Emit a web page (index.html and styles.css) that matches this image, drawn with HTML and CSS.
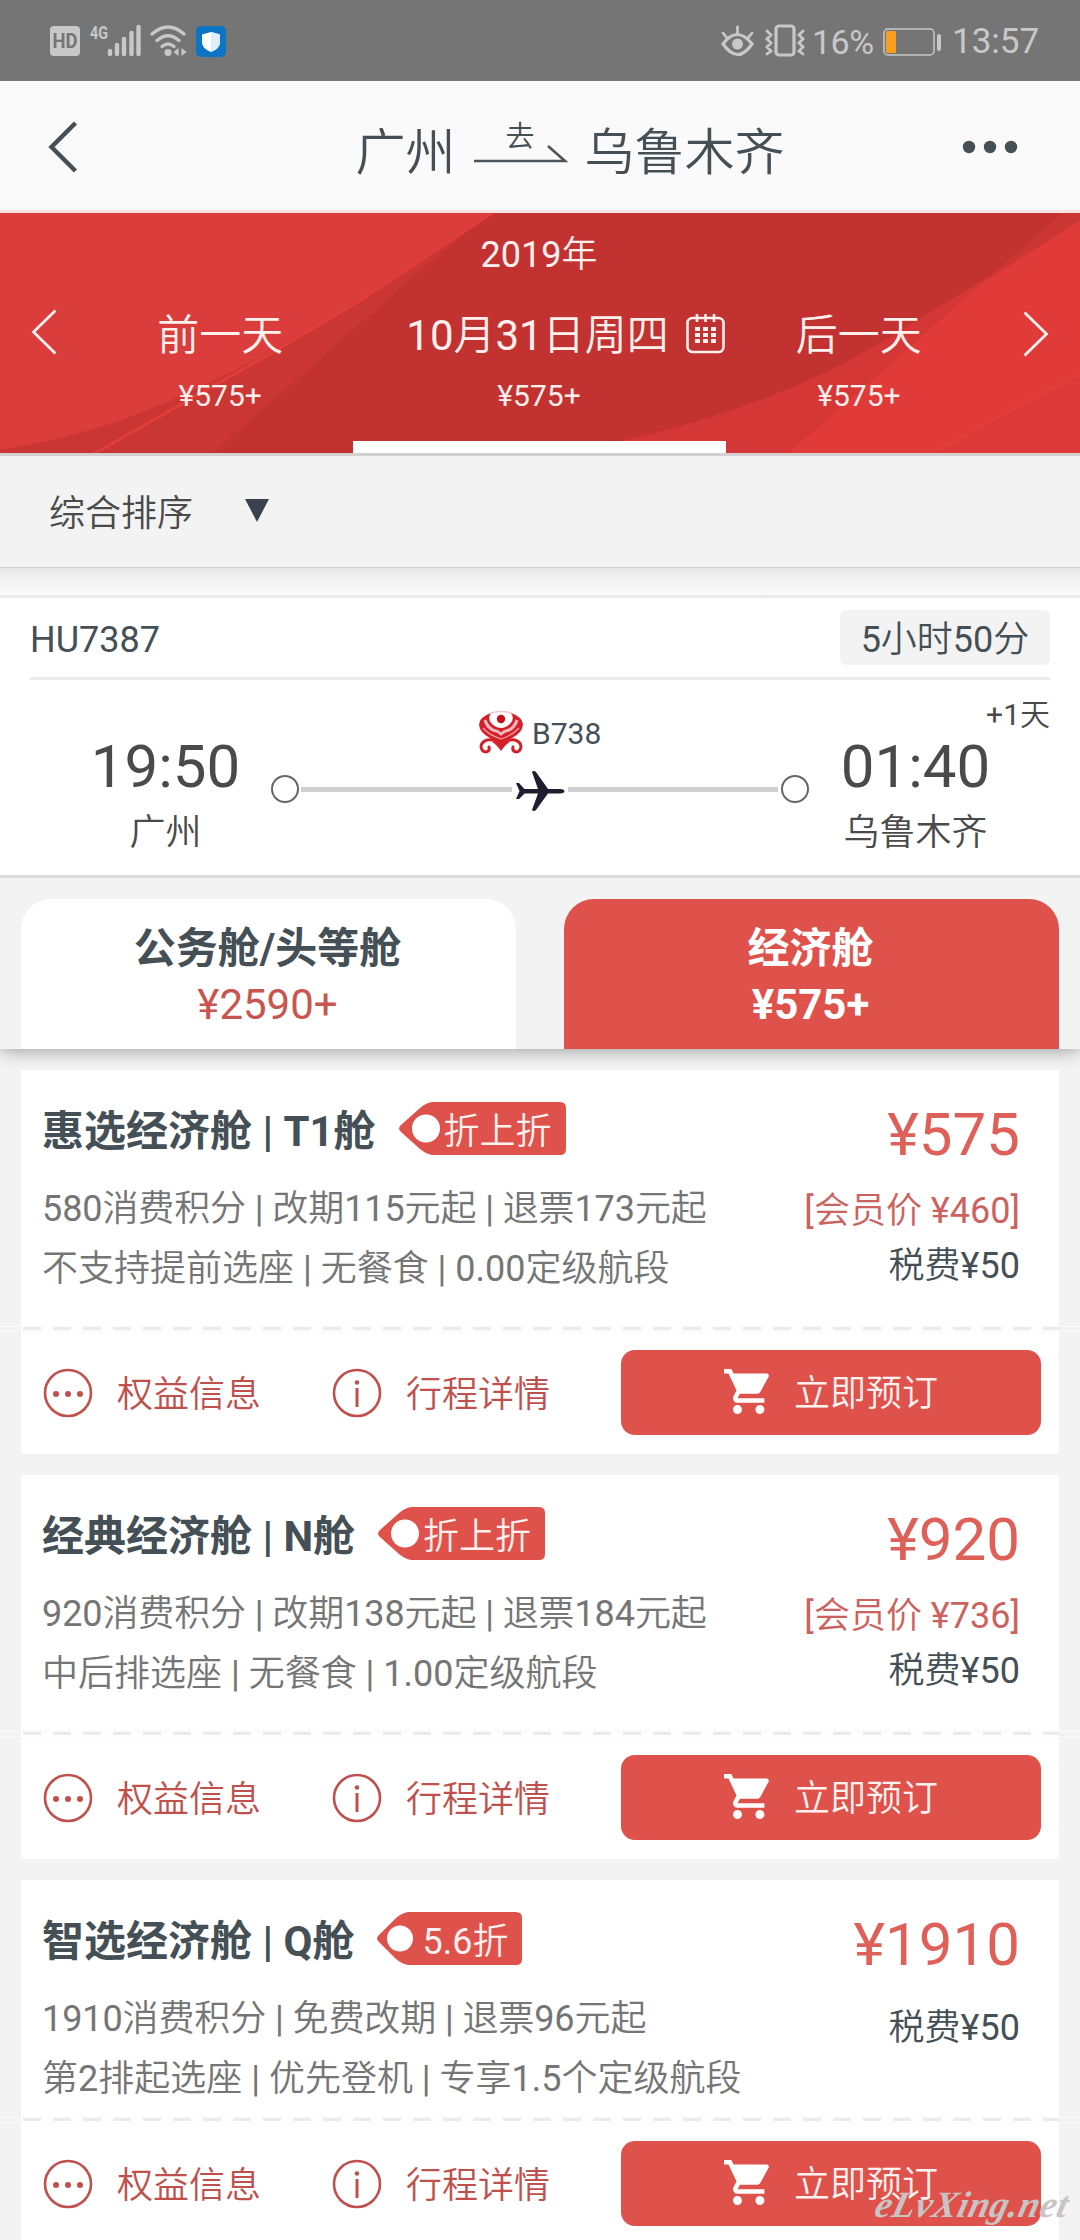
FILE: index.html
```html
<!DOCTYPE html>
<html lang="zh-CN">
<head>
<meta charset="utf-8">
<title>航班查询</title>
<link rel="stylesheet" href="styles.css">
</head>
<body>
<svg class="defs" width="0" height="0">
  <symbol id="i-more" viewBox="0 0 50 50">
    <circle cx="25" cy="25" r="23" fill="none" stroke="currentColor" stroke-width="2.6"/>
    <circle cx="13" cy="26" r="3"/><circle cx="25" cy="26" r="3"/><circle cx="37" cy="26" r="3"/>
  </symbol>
  <symbol id="i-info" viewBox="0 0 50 50">
    <circle cx="25" cy="25" r="23" fill="none" stroke="currentColor" stroke-width="2.6"/>
    <circle cx="25" cy="14.5" r="2.3"/><rect x="23.5" y="20" width="3" height="19"/>
  </symbol>
  <symbol id="i-cart" viewBox="1 2 20.5 20">
    <path d="M7 18c-1.1 0-1.99.9-1.99 2S5.900 22 7 22s2-.9 2-2-.9-2-2-2zM1 2v2h2l3.600 7.590-1.350 2.450c-.16.28-.25.61-.25.96 0 1.100.9 2 2 2h12v-2H7.420c-.14 0-.25-.11-.25-.25l.03-.12.9-1.630h7.450c.75 0 1.410-.41 1.750-1.030l3.580-6.490A1 1 0 0 0 20 4H5.210l-.94-2H1zm16 16c-1.100 0-1.990.9-1.990 2s.89 2 1.990 2 2-.9 2-2-.9-2-2-2z"/>
  </symbol>
</svg>

<header class="status">
  <svg class="status-left" width="190" height="40" viewBox="0 0 190 40">
    <rect x="0" y="4" width="30" height="30" rx="4" fill="#c8c8c8"/>
    <text x="15" y="26" class="hd" textLength="25" lengthAdjust="spacingAndGlyphs">HD</text>
    <text x="40" y="17" class="net" textLength="18" lengthAdjust="spacingAndGlyphs">4G</text>
    <g stroke="#c8c8c8" stroke-width="4.400" stroke-linecap="round">
      <path d="M60 29v3M67 23v9M74 17v15M81.500 11v21M88.500 5v27"/>
    </g>
    <g fill="none" stroke="#c8c8c8" stroke-width="3.400" stroke-linecap="round">
      <path d="M102 12q16-14 32 0M107 18.500q11-9.500 22 0M112 24.500q6-5 12 0"/>
    </g>
    <circle cx="118" cy="30.500" r="3.500" fill="#c8c8c8"/>
    <path d="M123.500 30l5-4v8zM136.500 30l-5-4v8z" fill="#c8c8c8"/>
    <rect x="146" y="4" width="30" height="31" rx="5" fill="#0b74c4"/>
    <path d="M161 10l9 2.500v8q0 6-9 9.500q-9-3.500-9-9.500v-8z" fill="#fff"/>
    <path d="M161 10l9 2.500v8q0 6-9 9.500z" fill="#dceffa"/>
  </svg>
  <div class="status-right">
    <svg width="86" height="40" viewBox="0 0 86 40">
      <g fill="none" stroke="#c8c8c8" stroke-width="3.200" stroke-linecap="round">
        <path d="M3 21q14-19 29 0q-14 21-29 0z"/>
        <path d="M3 10l4 5M17.500 4v6M32 10l-4 5M47 8l4 4-4 4 4 4-4 4 4 4-4 3" stroke-width="2.800"/>
        <rect x="56" y="3" width="18" height="29" rx="3"/>
        <path d="M83 8l-4 4 4 4-4 4 4 4-4 4 4 3" stroke-width="2.800"/>
      </g>
      <circle cx="17.500" cy="21" r="5.500" fill="#c8c8c8"/>
    </svg>
    <span class="pct">16%</span>
    <svg class="battery" width="60" height="30" viewBox="0 0 60 30">
      <rect x="1" y="1" width="50" height="26" rx="4" fill="none" stroke="#c8c8c8" stroke-width="1.500"/>
      <rect x="3" y="3" width="10" height="22" rx="1.500" fill="#f7a01d"/>
      <rect x="54" y="6" width="4" height="17" rx="2" fill="#c8c8c8"/>
    </svg>
    <span class="clock">13:57</span>
  </div>
</header>

<nav class="titlebar">
  <svg class="back" width="30" height="52" viewBox="0 0 30 52"><path d="M27.500 2L3.500 26l24 24" fill="none" stroke="#454f56" stroke-width="4.500"/></svg>
  <h1 class="route">
    <span>广州</span>
    <span class="route-dir"><small>去</small>
      <svg width="94" height="19" viewBox="0 0 94 19"><path d="M0 17H91L74 2" fill="none" stroke="#4b555c" stroke-width="2.600"/></svg>
    </span>
    <span>乌鲁木齐</span>
  </h1>
  <svg class="menu" width="56" height="14" viewBox="0 0 56 14" fill="#454f56"><circle cx="7" cy="7" r="6.200"/><circle cx="28" cy="7" r="6.200"/><circle cx="49" cy="7" r="6.200"/></svg>
</nav>

<section class="dates">
  <svg class="dates-bg" width="1080" height="240" viewBox="0 0 1080 240">
    <rect width="1080" height="240" fill="#c23231"/>
    <path d="M0 0H490L361 87L96 240H0z" fill="#da3d3b"/>
    <path d="M0 237Q90 222 155 194Q220 167 280 133L361 87L490 0L406 70L300 164L213 240H0z" fill="#c93634"/>
    <path d="M492 0L361 87L275 138L92 242" fill="none" stroke="#e03d3b" stroke-width="3"/>
    <path d="M1080 7L988 64L929 100Q870 137 836 154Q720 212 560 240H1080z" fill="#d43736"/>
    <path d="M1062 0H1080V8L988 64z" fill="#c93634"/>
    <path d="M1080 7L977 74L884 157L788 240H1080z" fill="#e03a39"/>
    <path d="M1080 160L932 240H1080z" fill="#dd3938"/>
    <path d="M1080 160L932 240" stroke="#e23e3c" stroke-width="3"/>
  </svg>
  <svg class="prev" width="26" height="46" viewBox="0 0 26 46"><path d="M24.500 1.500L2.500 23l22 21.500" fill="none" stroke="#ffefed" stroke-width="2.800"/></svg>
  <div class="day before"><b>前一天</b><i>¥575+</i></div>
  <div class="day current">
    <em>2019年</em>
    <b>10月31日周四
      <svg width="40" height="42" viewBox="0 0 40 42">
        <g fill="none" stroke="#ffefed" stroke-width="2.600"><rect x="1.500" y="5" width="36" height="34" rx="5"/><path d="M11 1v8M19.500 1v8M28 1v8"/></g>
        <path d="M9 14h5v4H9zM17 14h5v4h-5zM25 14h5v4h-5zM9 20h5v4H9zM17 20h5v4h-5zM25 20h5v4h-5zM9 26h5v4H9zM17 26h5v4h-5zM25 26h5v4h-5z" fill="#ffefed"/>
      </svg></b>
    <i>¥575+</i>
    <span class="marker"></span>
  </div>
  <div class="day after"><b>后一天</b><i>¥575+</i></div>
  <svg class="next" width="26" height="46" viewBox="0 0 26 46"><path d="M1.500 1.500L23.500 23l-22 21.500" fill="none" stroke="#ffefed" stroke-width="2.800"/></svg>
</section>

<div class="sort"><span>综合排序</span><span class="caret"></span></div>
<div class="shade"></div>

<section class="flight">
  <div class="flight-head"><span>HU7387</span><span class="duration">5小时50分</span></div>
  <div class="flight-body">
    <div class="stop from"><strong>19:50</strong><span>广州</span></div>
    <div class="track">
      <div class="plane-type">
        <svg width="46" height="44" viewBox="0 0 46 44">
          <path d="M13 2Q1 6 1 14Q2 22 12 27Q19 30 23 35Q27 30 34 27Q44 22 45 14Q45 6 33 2Q37 8 32 13Q23 21 14 13Q9 8 13 2z" fill="#d4202a"/>
          <path d="M7 9Q9 16 15 19Q20 20 23 23Q26 20 31 19Q37 16 39 9" fill="none" stroke="#f6b9bb" stroke-width="3"/>
          <path d="M5 17Q11 24 23 28Q35 24 41 17" fill="none" stroke="#f3a5a8" stroke-width="1.200"/>
          <path d="M13 2Q23-1 33 2" fill="none" stroke="#f6c4c4" stroke-width="1.500"/>
          <circle cx="23" cy="8" r="4.200" fill="#c8101c"/>
          <path d="M23 34Q18 28 9 29Q3 31 3 36Q4 41 8 41Q12 40 11 36M23 34Q28 28 37 29Q43 31 43 36Q42 41 38 41Q34 40 35 36" fill="none" stroke="#d4202a" stroke-width="3" stroke-linecap="round"/>
          <path d="M14 31Q18 33 23 40Q28 33 32 31L23 30z" fill="#d4202a"/>
        </svg>
        <span>B738</span>
      </div>
      <div class="line">
        <span class="dot"></span><span class="bar"></span>
        <svg width="50" height="42" viewBox="0 0 50 42" fill="#1e1e30"><path d="M1 13h3l5.500 6H23L17 2q2-2 4 0L33 19h12q4.500.5 4.500 2.200T45 23.500H33L21 40q-2 2-4 0l6-16.500H9.500L4 29H1l3.500-8z"/></svg>
        <span class="bar"></span><span class="dot"></span>
      </div>
    </div>
    <div class="stop to"><strong>01:40</strong><span>乌鲁木齐</span><small class="plus">+1天</small></div>
  </div>
</section>

<section class="tabs">
  <div class="tab"><b>公务舱/头等舱</b><span>¥2590+</span></div>
  <div class="tab active"><b>经济舱</b><span>¥575+</span></div>
</section>

<main class="fares">
  <article class="fare">
    <div class="fare-main">
      <div class="info">
        <h2>惠选经济舱 | T1舱 <span class="tag"><svg width="168" height="53" viewBox="0 0 168 53"><path d="M34 0H162q6 0 6 6V47q0 6-6 6H34Q28 52 22 47L3 30Q-1 26.500 3 23L22 6Q28 1 34 0z" fill="#df514b"/><circle cx="28" cy="26.500" r="14" fill="#fff"/></svg><span>折上折</span></span></h2>
        <p class="terms">580消费积分 | 改期115元起 | 退票173元起</p>
        <p>不支持提前选座 | 无餐食 | 0.00定级航段</p>
      </div>
      <div class="cost"><strong>¥575</strong><em>[会员价 ¥460]</em><span>税费¥50</span></div>
    </div>
    <div class="perforation"></div>
    <div class="actions">
      <a><svg><use href="#i-more"/></svg>权益信息</a>
      <a><svg><use href="#i-info"/></svg>行程详情</a>
      <button><svg><use href="#i-cart"/></svg>立即预订</button>
    </div>
  </article>

  <article class="fare">
    <div class="fare-main">
      <div class="info">
        <h2>经典经济舱 | N舱 <span class="tag"><svg width="168" height="53" viewBox="0 0 168 53"><path d="M34 0H162q6 0 6 6V47q0 6-6 6H34Q28 52 22 47L3 30Q-1 26.500 3 23L22 6Q28 1 34 0z" fill="#df514b"/><circle cx="28" cy="26.500" r="14" fill="#fff"/></svg><span>折上折</span></span></h2>
        <p class="terms">920消费积分 | 改期138元起 | 退票184元起</p>
        <p>中后排选座 | 无餐食 | 1.00定级航段</p>
      </div>
      <div class="cost"><strong>¥920</strong><em>[会员价 ¥736]</em><span>税费¥50</span></div>
    </div>
    <div class="perforation"></div>
    <div class="actions">
      <a><svg><use href="#i-more"/></svg>权益信息</a>
      <a><svg><use href="#i-info"/></svg>行程详情</a>
      <button><svg><use href="#i-cart"/></svg>立即预订</button>
    </div>
  </article>

  <article class="fare compact">
    <div class="fare-main">
      <div class="info">
        <h2>智选经济舱 | Q舱 <span class="tag"><svg width="146" height="53" viewBox="0 0 146 53"><path d="M32 0H140q6 0 6 6V47q0 6-6 6H32Q26 52 20 47L3 30Q-1 26.500 3 23L20 6Q26 1 32 0z" fill="#df514b"/><circle cx="24" cy="26.500" r="13" fill="#fff"/></svg><span>5.6折</span></span></h2>
        <p class="terms">1910消费积分 | 免费改期 | 退票96元起</p>
        <p>第2排起选座 | 优先登机 | 专享1.5个定级航段</p>
      </div>
      <div class="cost"><strong>¥1910</strong><span>税费¥50</span></div>
    </div>
    <div class="perforation"></div>
    <div class="actions">
      <a><svg><use href="#i-more"/></svg>权益信息</a>
      <a><svg><use href="#i-info"/></svg>行程详情</a>
      <button><svg><use href="#i-cart"/></svg>立即预订</button>
    </div>
  </article>
</main>
<div class="watermark">eLvXing.net</div>
</body>
</html>
```
FILE: styles.css
```css
* { box-sizing: border-box; }

body {
  margin: 0;
  width: 1080px;
  height: 2240px;
  overflow: hidden;
  position: relative;
  background: #f3f3f3;
  color: #454f56;
  font: 36px/60px Roboto, "Noto Sans CJK SC DemiLight", "Noto Sans CJK SC Light", "Noto Sans CJK SC", sans-serif;
  white-space: nowrap;
}

svg { display: block; flex: none; overflow: visible; }
.defs { position: absolute; }
h1, h2, p { margin: 0; font-weight: 400; }
b, strong, em, i, small { font-weight: 400; font-style: normal; }
h2, .tab b, .tab.active span {
  font-family: Roboto, "Noto Sans CJK SC", sans-serif;
  font-weight: 700;
}

/* status bar */
.status {
  height: 81px;
  display: flex;
  justify-content: space-between;
  padding: 22px 46px 0 50px;
  background: #757575;
  color: #c8c8c8;
}
.status-right { display: flex; height: 40px; align-items: center; line-height: 40px; }
.status-right > svg { margin-top: 1px; }
.pct { margin-left: 6px; width: 64px; font-size: 34px; letter-spacing: -.5px; }
.battery { margin: 0 9px 0 7px; }
.clock { font-size: 35px; width: 82px; }
.hd { font: 700 20px Roboto, sans-serif; fill: #757575; text-anchor: middle; }
.net { font: 700 19px Roboto, sans-serif; fill: #c8c8c8; }

/* title bar */
.titlebar {
  height: 132px;
  padding: 2px 62px 0 48px;
  display: flex;
  align-items: center;
  justify-content: space-between;
  background: #fafafa;
  border-bottom: 3px solid #f6e3e2;
}
.route { display: flex; align-items: center; font-size: 50px; font-weight: 300; height: 70px; line-height: 70px; margin: 12px 0 0 100px; }
.route-dir { width: 94px; margin: 0 17px 0 18px; display: flex; flex-direction: column; align-items: center; }
.route-dir small { font-size: 29px; font-weight: 300; line-height: 30px; margin: -20px 0 -8px -1px; }

/* date switcher */
.dates {
  position: relative;
  height: 240px;
  display: flex;
  padding: 0 31px;
  color: #ffefed;
}
.dates-bg { position: absolute; left: 0; top: 0; overflow: hidden; }
.dates > :not(.dates-bg) { position: relative; }
.prev { margin-top: 96px; }
.next { margin-top: 98px; }
.day { flex: 1; display: flex; flex-direction: column; align-items: center; padding-top: 93px; }
.day.before { padding-left: 31px; }
.day.after { padding-right: 32px; }
.day.current { flex: 0 0 374px; padding: 12px 1px 0 0; }
.day em { line-height: 60px; margin-bottom: 21px; }
.day b { font-size: 42px; line-height: 60px; display: flex; align-items: center; }
.day.current b { padding-left: 54px; }
.day b svg { margin: -5px 0 0 17px; }
.day i { font-size: 30px; line-height: 60px; }
.marker { margin-top: 15px; width: 373px; height: 12px; background: #fff; }

.sort {
  height: 115px;
  border-top: 3px solid #d2d0d0;
  border-bottom: 1px solid #cecece;
  display: flex;
  align-items: center;
  padding: 5px 49px 0;
  color: #4a4a4a;
}
.caret { margin: -7px 0 0 52px; border: 12px solid transparent; border-top: 23px solid #3a424f; border-bottom: 0; }
.shade { height: 30px; background: linear-gradient(#e6e6e6, #f3f3f3 45%, #fafafa); border-bottom: 3px solid #ebebeb; }

/* flight summary */
.flight { height: 280px; padding: 0 30px; background: #fff; border-bottom: 3px solid #dcdcdc; }
.flight-head { height: 82px; display: flex; align-items: center; justify-content: space-between; border-bottom: 3px solid #ebebeb; }
.flight-head span { margin-top: 4px; }
.flight-head .duration { width: 210px; height: 55px; line-height: 60px; margin: 0; text-align: center; background: #f3f3f3; border-radius: 6px; }
.flight-body { display: flex; color: #4a4a4a; }
.stop { position: relative; width: 241px; padding-top: 51px; display: flex; flex-direction: column; align-items: center; }
.stop.from { padding-left: 30px; }
.stop.to { padding-right: 28px; }
.stop strong { font-size: 60px; line-height: 72px; }
.stop > span { line-height: 61px; }
.plus { position: absolute; right: 0; top: 15px; font-size: 30px; line-height: 40px; }
.track { width: 538px; padding-top: 31px; }
.plane-type { display: flex; height: 44px; padding-left: 207px; gap: 8px; font-size: 30px; line-height: 46px; color: #454f56; }
.line { display: flex; align-items: center; margin-top: 15px; height: 42px; gap: 3px; }
.dot { width: 28px; height: 28px; border: 2px solid #666; border-radius: 50%; flex: none; margin-top: -4px; }
.dot + .bar { margin-left: -1px; }
.bar { flex: 1; height: 5px; background: #cfcfcf; margin-top: -4px; }

/* cabin tabs */
.tabs {
  position: relative;
  height: 171px;
  padding: 21px 21px 0;
  display: flex;
  gap: 48px;
  background: #f3f3f3;
  box-shadow: 0 2px 16px rgba(0, 0, 0, .35);
  clip-path: inset(0 0 -24px);
}
.tab { flex: 1; display: flex; flex-direction: column; align-items: center; padding: 20px 2px 0 0; font-size: 42px; border-radius: 30px 30px 0 0; background: #fff; }
.tab b { line-height: 60px; }
.tab span { line-height: 52px; color: #c8554f; }
.tab.active { background: #df514b; color: #fff; }
.tab.active span { color: #fff; }

/* fare cards */
.fares { padding: 21px 21px 0; display: flex; flex-direction: column; gap: 21px; }
.fare { background: #fff; height: 384px; flex: none; }
.fare-main { height: 256px; display: flex; justify-content: space-between; padding: 0 39px 0 21px; }
.compact .fare-main { height: 237px; }
.info { padding-top: 32px; color: #757575; }
.info h2 { display: flex; align-items: center; height: 60px; font-size: 42px; color: #454f56; margin-bottom: 17px; }
.info p { line-height: 60px; }
.info .terms { letter-spacing: -.1px; }
.tag { position: relative; margin: -8px 0 0 22px; font: 36px/53px Roboto, "Noto Sans CJK SC DemiLight", "Noto Sans CJK SC Light", "Noto Sans CJK SC", sans-serif; color: #fff1ef; }
.tag span { position: absolute; left: 46px; top: 4px; }
.cost { display: flex; flex-direction: column; align-items: flex-end; padding-top: 30px; color: #df5f59; }
.cost strong { font-size: 60px; line-height: 70px; margin-bottom: 14px; }
.cost em { line-height: 55px; color: #cc625d; }
.cost span { line-height: 55px; color: #454f56; }
.compact .cost strong { margin-bottom: 21px; }
.perforation {
  height: 6px;
  margin: 0 -21px;
  border: solid #fafafa;
  border-width: 1px 0;
  background:
    repeating-linear-gradient(90deg, #ebebeb 0 18px, #fff 18px 30px) 23px 0 / 1036px 3px no-repeat,
    linear-gradient(#fff, #fff) 21px 0 / 1038px 100% no-repeat;
}
.actions { display: flex; align-items: center; height: 122px; padding: 0 18px 0 22px; color: #c0504c; }
.actions a { display: flex; align-items: center; width: 289px; gap: 24px; padding-top: 4px; }
.actions a svg { width: 50px; height: 50px; fill: currentColor; margin-top: -5px; }
.actions button {
  display: flex;
  align-items: center;
  justify-content: center;
  gap: 24px;
  width: 420px;
  height: 85px;
  margin: -1px 0 0 auto;
  padding: 3px 0 0;
  border: 0;
  border-radius: 14px;
  background: #df514b;
  color: #fff1ef;
  font: inherit;
}
.actions button svg { width: 46px; height: 45px; fill: #fff; margin-top: -6px; }

.watermark {
  position: absolute;
  left: 876px;
  top: 2181px;
  color: #c8c4c4;
  font: italic 700 37px/48px "Liberation Serif", cursive;
  letter-spacing: .6px;
  transform: skewX(-14deg);
}
```
